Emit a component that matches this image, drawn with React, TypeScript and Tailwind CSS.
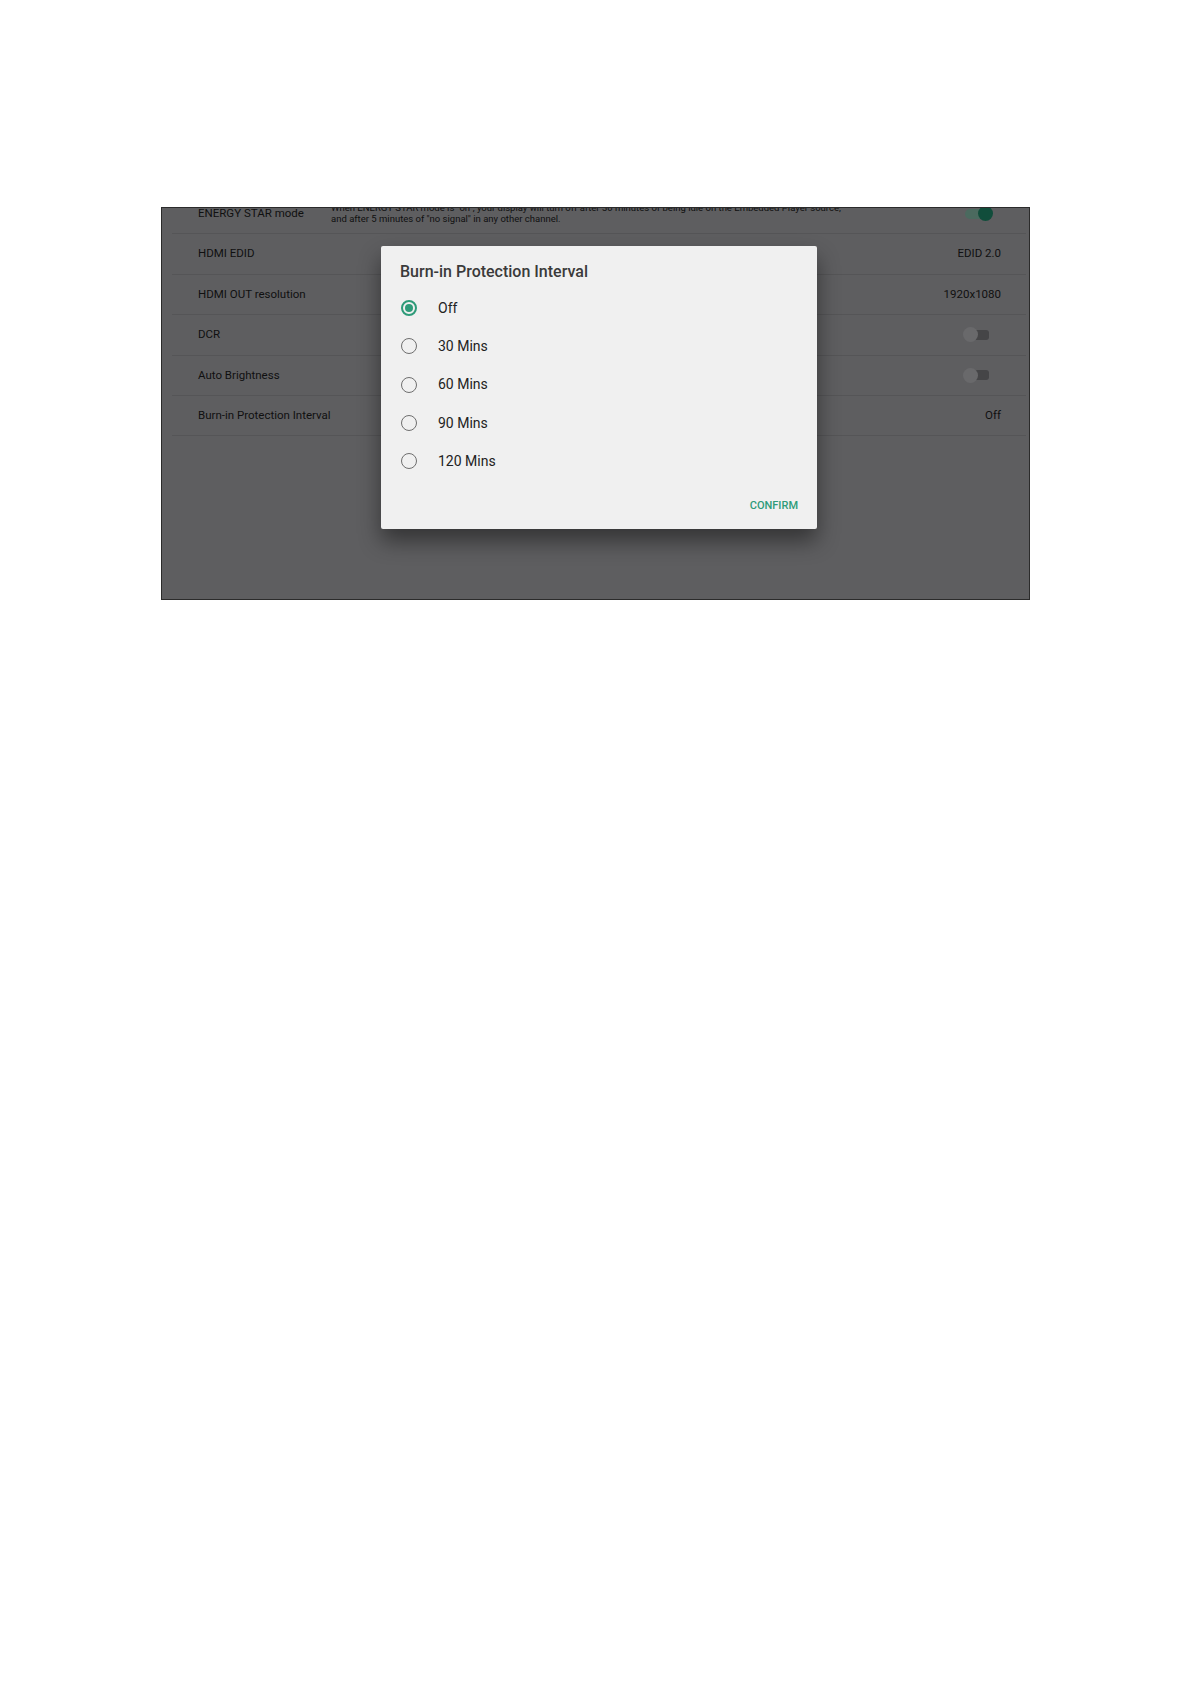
const ROWS = [
  { id: "edid", label: "HDMI EDID", value: "EDID 2.0" },
  { id: "out", label: "HDMI OUT resolution", value: "1920x1080" },
  { id: "dcr", label: "DCR", toggle: false },
  { id: "auto", label: "Auto Brightness", toggle: false },
  { id: "burn", label: "Burn-in Protection Interval", value: "Off" },
];

const OPTIONS = ["Off", "30 Mins", "60 Mins", "90 Mins", "120 Mins"];

function Toggle({ on }: { on: boolean }) {
  return on ? (
    <div className="relative w-[28px] h-[15px] flex items-center">
      <div className="w-[22px] h-[10px] rounded-full bg-[#4b6a5f]" />
      <div className="absolute right-0 w-[15px] h-[15px] rounded-full bg-[#114d3b]" />
    </div>
  ) : (
    <div className="relative w-[28px] h-[15px] flex items-center">
      <div className="ml-[6px] w-[20px] h-[10px] rounded-[3px] bg-[#454547]" />
      <div className="absolute left-0 w-[15px] h-[15px] rounded-full bg-[#69696b]" />
    </div>
  );
}

function Radio({ checked }: { checked: boolean }) {
  return checked ? (
    <div className="w-[16px] h-[16px] rounded-full border-2 border-[#2e9b79] flex items-center justify-center">
      <div className="w-[8px] h-[8px] rounded-full bg-[#2e9b79]" />
    </div>
  ) : (
    <div className="w-[16px] h-[16px] rounded-full border-[1.7px] border-[#6e6e6e]" />
  );
}

export default function App() {
  return (
    <div className="min-h-[1684px] bg-white pt-[207px] font-['Roboto','Liberation_Sans',sans-serif]">
      <div className="relative ml-[161px] w-[869px] h-[393px] border border-[#2b2b2b] bg-[#5e5e60] overflow-hidden">
        {/* Settings list (dimmed behind dialog) */}
        <div className="-mt-[14px] pl-[10px] pr-[3px] text-[#101010]">
          <div className="h-[40.4px] flex items-center border-b border-[#555557] pl-[26px] pr-[33px]">
            <span className="w-[133px] text-[11.5px]">ENERGY STAR mode</span>
            <div className="flex-1 text-[9.5px] leading-[10.5px] whitespace-nowrap">
              <p>When ENERGY STAR mode is "on", your display will turn off after 30 minutes of being idle on the Embedded Player source,</p>
              <p>and after 5 minutes of "no signal" in any other channel.</p>
            </div>
            <Toggle on />
          </div>
          {ROWS.map((row) => (
            <div
              key={row.id}
              className="h-[40.4px] flex items-center justify-between border-b border-[#555557] pl-[26px] pr-[25px]"
            >
              <span className="text-[11.5px]">{row.label}</span>
              {row.value ? (
                <span className="text-[11.5px]">{row.value}</span>
              ) : (
                <div className="mr-[10px]">
                  <Toggle on={false} />
                </div>
              )}
            </div>
          ))}
        </div>

        {/* Dialog */}
        <div className="absolute left-[219px] top-[38px] w-[436px] h-[283px] bg-[#f0f0f0] rounded-[2px] shadow-[0_12px_22px_rgba(0,0,0,0.45)]">
          <h2 className="pt-[16px] pl-[19px] text-[16px] leading-[20px] font-medium text-[#3a3a3a]">
            Burn-in Protection Interval
          </h2>
          <div className="mt-[7px]">
            {OPTIONS.map((opt, i) => (
              <div key={opt} className="h-[38.3px] flex items-center pl-[20px] gap-[21px]">
                <Radio checked={i === 0} />
                <span className="text-[14px] text-[#222]">{opt}</span>
              </div>
            ))}
          </div>
          <div className="mt-[19px] flex justify-end pr-[19px]">
            <span className="text-[11px] leading-[14px] font-medium text-[#2e9b79]">CONFIRM</span>
          </div>
        </div>
      </div>
    </div>
  );
}
